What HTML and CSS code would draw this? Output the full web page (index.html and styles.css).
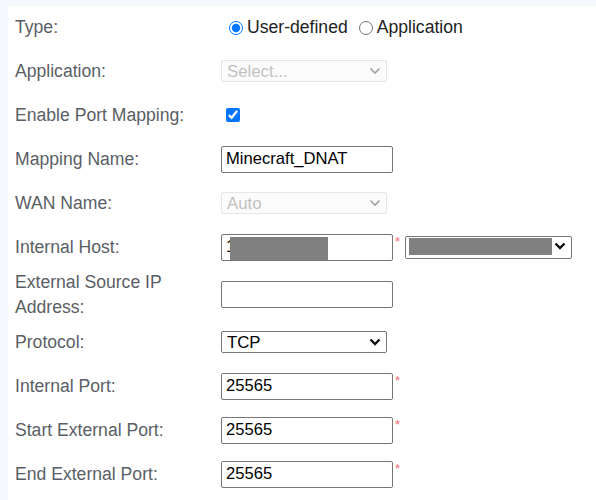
FILE: index.html
```html
<!DOCTYPE html>
<html lang="en">

<head>
    <meta charset="UTF-8">
    <meta name="viewport" content="width=device-width, initial-scale=1.0">
    <title>Port Mapping</title>
    <link rel="stylesheet" href="styles.css">
</head>

<body>

    <!-- Port mapping form -->
    <div class="panel">
        <div class="row first">
            <label class="label">Type:</label>
            <div class="field">
                <input type="radio" name="type" class="radio" checked><span class="opt">User-defined</span>
                <input type="radio" name="type" class="radio second"><span class="opt">Application</span>
            </div>
        </div>

        <div class="row">
            <label class="label">Application:</label>
            <div class="field">
                <span class="selwrap">
                    <select class="sel" disabled>
                        <option>Select...</option>
                    </select>
                    <svg class="chev off" width="12" height="8" viewBox="0 0 12 8"><path d="M1.5 1.5 L6 6 L10.5 1.5" /></svg>
                </span>
            </div>
        </div>

        <div class="row">
            <label class="label">Enable Port Mapping:</label>
            <div class="field">
                <input type="checkbox" class="check" checked>
            </div>
        </div>

        <div class="row">
            <label class="label">Mapping Name:</label>
            <div class="field">
                <input type="text" class="txt" value="Minecraft_DNAT">
            </div>
        </div>

        <div class="row">
            <label class="label">WAN Name:</label>
            <div class="field">
                <span class="selwrap">
                    <select class="sel" disabled>
                        <option>Auto</option>
                    </select>
                    <svg class="chev off" width="12" height="8" viewBox="0 0 12 8"><path d="M1.5 1.5 L6 6 L10.5 1.5" /></svg>
                </span>
            </div>
        </div>

        <div class="row">
            <label class="label">Internal Host:</label>
            <div class="field">
                <span class="selwrap">
                    <input type="text" class="txt" value="1">
                    <span class="redact host-redact"></span>
                </span><span class="req">*</span>
                <span class="selwrap host">
                    <select class="sel host-sel">
                        <option></option>
                    </select>
                    <span class="redact sel-redact"></span>
                    <svg class="chev" width="12" height="8" viewBox="0 0 12 8"><path d="M1.5 1.5 L6 6 L10.5 1.5" /></svg>
                </span>
            </div>
        </div>

        <div class="row tall">
            <label class="label">External Source IP Address:</label>
            <div class="field">
                <input type="text" class="txt">
            </div>
        </div>

        <div class="row">
            <label class="label">Protocol:</label>
            <div class="field">
                <span class="selwrap">
                    <select class="sel">
                        <option>TCP</option>
                        <option>UDP</option>
                        <option>TCP/UDP</option>
                    </select>
                    <svg class="chev" width="12" height="8" viewBox="0 0 12 8"><path d="M1.5 1.5 L6 6 L10.5 1.5" /></svg>
                </span>
            </div>
        </div>

        <div class="row">
            <label class="label">Internal Port:</label>
            <div class="field">
                <input type="text" class="txt" value="25565"><span class="req">*</span>
            </div>
        </div>

        <div class="row">
            <label class="label">Start External Port:</label>
            <div class="field">
                <input type="text" class="txt" value="25565"><span class="req">*</span>
            </div>
        </div>

        <div class="row">
            <label class="label">End External Port:</label>
            <div class="field">
                <input type="text" class="txt" value="25565"><span class="req">*</span>
            </div>
        </div>
    </div>

</body>

</html>
```

FILE: styles.css
```css
body {
    font-family: 'Liberation Sans', Arial, sans-serif;
    margin: 0;
    background: #f5f8fd;
    height: 500px;
    overflow: hidden;
}

.panel {
    background: #fff;
    margin: 6px 0 0 8px;
    padding-left: 7px;
    min-height: 494px;
}

.row {
    display: grid;
    grid-template-columns: 206px auto;
    align-items: center;
    height: 44px;
}

.row.first {
    height: 43px;
}

.row.tall {
    height: 51px;
}

.label {
    font-size: 17.6px;
    color: #5a5e66;
    line-height: 25px;
}

.field {
    display: flex;
    align-items: center;
    font-size: 17.6px;
}

.radio {
    width: 14px;
    height: 14px;
    margin: 0 4px 0 8px;
}

.radio.second {
    margin-left: 11px;
}

.opt {
    color: #222;
}

.check {
    width: 14px;
    height: 14px;
    margin: 0 0 0 5px;
}

.txt {
    box-sizing: border-box;
    width: 172px;
    height: 27px;
    font-family: 'Liberation Sans', Arial, sans-serif;
    font-size: 16.6px;
    padding: 1px 4px;
    margin: 0;
    border: 1px solid #767676;
    border-radius: 2px;
    color: #000;
}

.sel {
    -webkit-appearance: none;
    appearance: none;
    box-sizing: border-box;
    width: 166px;
    height: 22px;
    font-family: 'Liberation Sans', Arial, sans-serif;
    font-size: 16.8px;
    margin: 0;
    padding: 0 5px;
    border: 1px solid #767676;
    border-radius: 2px;
    background: #fff;
    color: #000;
}

.sel:disabled {
    background: #fafafa;
    border-color: #dcdcdc;
    color: #a8a8a8;
}

.selwrap {
    position: relative;
    display: inline-flex;
}

.selwrap.host {
    margin-left: 5px;
}

.host-sel {
    width: 167px;
    height: 23px;
}

.chev {
    position: absolute;
    right: 6px;
    top: 7px;
    pointer-events: none;
}

.chev path {
    fill: none;
    stroke: #111;
    stroke-width: 2.4;
}

.chev.off path {
    stroke: #a0a0a0;
    stroke-width: 1.6;
}

.host .chev {
    top: 6px;
}

.req {
    color: #f56c6c;
    font-size: 13px;
    align-self: center;
    margin: -11px 0 0 2px;
    line-height: 12px;
}

.redact {
    position: absolute;
    background: #808080;
}

.host-redact {
    left: 9px;
    top: 3px;
    width: 98px;
    height: 23px;
}

.sel-redact {
    left: 4px;
    top: 2px;
    width: 143px;
    height: 17px;
}
```
